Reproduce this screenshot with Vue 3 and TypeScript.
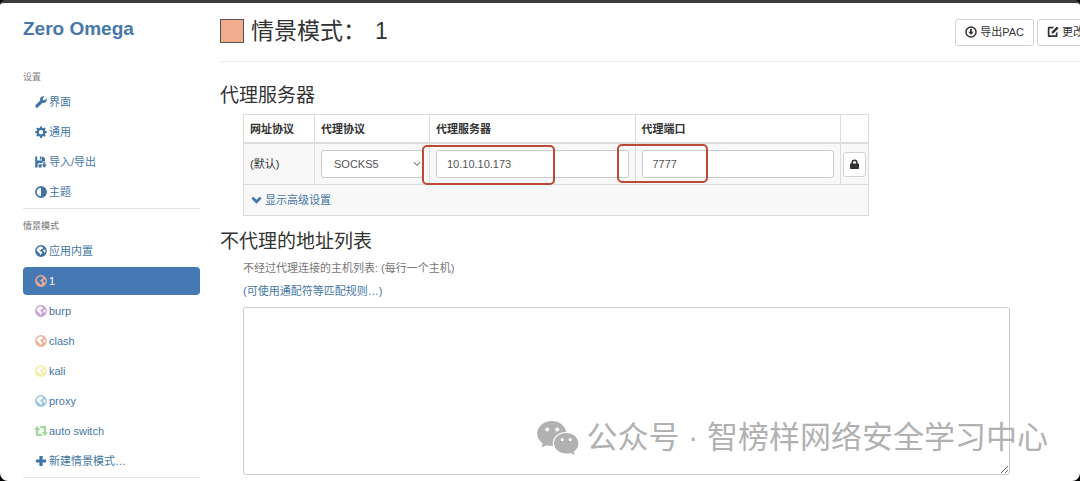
<script setup lang="ts">
import { ref } from 'vue'

interface NavItem {
  id: string
  label: string
  icon: string
  tone: string
}

const settings: NavItem[] = [
  { id: 'ui', label: '界面', icon: 'wrench', tone: 'link' },
  { id: 'general', label: '通用', icon: 'cog', tone: 'link' },
  { id: 'io', label: '导入/导出', icon: 'save', tone: 'link' },
  { id: 'theme', label: '主题', icon: 'adjust', tone: 'link' },
]

const profiles: NavItem[] = [
  { id: 'system', label: '应用内置', icon: 'globe', tone: 'link' },
  { id: 'one', label: '1', icon: 'globe', tone: 'salmon' },
  { id: 'burp', label: 'burp', icon: 'globe', tone: 'purple' },
  { id: 'clash', label: 'clash', icon: 'globe', tone: 'peach' },
  { id: 'kali', label: 'kali', icon: 'globe', tone: 'yellow' },
  { id: 'proxy', label: 'proxy', icon: 'globe', tone: 'sky' },
  { id: 'auto', label: 'auto switch', icon: 'retweet', tone: 'green' },
  { id: 'new', label: '新建情景模式…', icon: 'plus', tone: 'link' },
]

const groups = [
  { title: '设置', items: settings },
  { title: '情景模式', items: profiles },
]

const paths: Record<string, string> = {
  wrench:
    'M11.6 2.3 9.7 4.2 8 3.9 7.7 2.3 9.6.4C8.200-.1 6.700.2 5.800 1.200 5 2.100 4.800 3.400 5.200 4.500L.7 9C.1 9.600.1 10.500.7 11.200 1.400 11.900 2.400 11.900 3 11.300L7.500 6.800C8.600 7.200 9.900 7 10.800 6.100 11.800 5.200 12.100 3.600 11.600 2.300Z',
  cog:
    'M5.100.4h1.800l.3 1.500 1 .4 1.300-.8 1.200 1.200-.8 1.300.4 1 1.500.3v1.700l-1.500.3-.4 1 .8 1.300-1.200 1.200-1.300-.8-1 .4-.3 1.500H5.100l-.3-1.500-1-.4-1.300.8-1.200-1.200.8-1.300-.4-1L.2 7V5.300L1.700 5l.4-1-.8-1.300 1.200-1.200 1.300.8 1-.4ZM6 3.900a2.250 2.250 0 1 0 0 4.500 2.250 2.250 0 0 0 0-4.500Z',
  save:
    'M.2.400h2v4.200h4.600V.4h1l2.200 2v3H7.500v1.500H3.800L2.600 8v3.400H.2ZM4.900.4h1.400v3.100H4.900ZM3.600 8.300h3v3.100h-3ZM8.300 6.200h2v2.500h1.600L9.300 11.800 6.700 8.700h1.600Z',
  adjust:
    'M6 .1a5.900 5.900 0 1 0 0 11.800A5.900 5.900 0 0 0 6 .1ZM6 1.700v8.600a4.300 4.300 0 0 1 0-8.600Z',
  globe:
    'M6 .1a5.900 5.900 0 1 0 0 11.800A5.900 5.900 0 0 0 6 .1ZM6.200 1.300l.6.900 1-.1.300 1-.8.9-1.100.1-.4 1.200-1 .3.200.7 1.400.2.900 1-.5 1.100-.9.500-.2 1.100C4.900 9.500 4.900 8.700 4.300 8 3.800 7.300 2.500 6.700 1.700 5.500c.2-2.200 2.200-4.100 4.500-4.200ZM9 4.500l1.200.1.400 1.300-.3 1.300-.7.700-.6-1.100-.9-.5.100-1.100Z',
  retweet:
    'M2.700 1.700 0 5h1.600v4.200c0 .6.400 1 1 1h5L5.900 8.300H3.700V5h1.700ZM4.400 1.700h5c.6 0 1 .4 1 1V7H12l-2.700 3.300L6.600 7h1.700V3.700H6.100Z',
  plus: 'M4.400.9h3.200v3.500h3.500v3.200H7.600v3.500H4.400V7.600H.9V4.400h3.500Z',
}

const scheme = ref('SOCKS5')
const host = ref('10.10.10.173')
const port = ref('7777')
const bypass = ref('')
const active = ref('one')
</script>

<template>
  <div class="window">
    <aside class="sidebar">
      <h1 class="brand">Zero Omega</h1>
      <nav v-for="group in groups" :key="group.title" class="group">
        <h2 class="group-title">{{ group.title }}</h2>
        <ul class="nav">
          <li v-for="item in group.items" :key="item.id">
            <a
              href="#"
              class="nav-link"
              :class="{ active: active === item.id }"
              @click.prevent="active = item.id"
            >
              <svg class="icon" :class="[item.tone, item.icon]" viewBox="0 0 12 12" aria-hidden="true">
                <path :d="paths[item.icon]" fill-rule="evenodd" />
              </svg>
              <span>{{ item.label }}</span>
            </a>
          </li>
        </ul>
      </nav>
    </aside>

    <main class="main">
      <header class="header">
        <span class="swatch"></span>
        <h2 class="title"><span>情景模式：</span><span>1</span></h2>
        <div class="actions">
          <button type="button" class="btn">
            <svg class="icon" viewBox="0 0 12 12" aria-hidden="true">
              <path
                fill-rule="evenodd"
                d="M6 .2a5.800 5.800 0 1 0 0 11.600A5.800 5.800 0 0 0 6 .2ZM6 1.700a4.300 4.300 0 1 1 0 8.600 4.300 4.300 0 0 1 0-8.600ZM5.100 2.800h1.800v3h1.700L6 8.900 3.400 5.800h1.700Z"
              />
            </svg>
            导出PAC
          </button>
          <button type="button" class="btn">
            <svg class="icon" viewBox="0 0 12 12" aria-hidden="true">
              <path d="M7.200.8 5.600 2.500H2.500v6.800h6.300V7.200l1.700-1.700v4.400c0 .7-.5 1.100-1.100 1.100H1.900C1.200 11 .8 10.500.8 9.900v-8C.8 1.200 1.300.8 1.900.8Z" />
              <path d="M9.900.5 11.600 2.200 6.600 7.200 4.500 7.700 4.900 5.500Z" />
            </svg>
            更改
          </button>
        </div>
      </header>

      <section>
        <h3 class="section-title">代理服务器</h3>
        <div class="table-area">
          <table class="servers">
            <colgroup>
              <col class="col-url" />
              <col class="col-scheme" />
              <col />
              <col />
              <col class="col-auth" />
            </colgroup>
            <thead>
              <tr>
                <th scope="col">网址协议</th>
                <th scope="col">代理协议</th>
                <th scope="col">代理服务器</th>
                <th scope="col">代理端口</th>
                <th></th>
              </tr>
            </thead>
            <tbody>
              <tr>
                <td>(默认)</td>
                <td>
                  <div class="select-wrap">
                    <select v-model="scheme" class="control select" aria-label="代理协议">
                      <option>SOCKS5</option>
                    </select>
                    <svg class="caret" viewBox="0 0 8 6" aria-hidden="true">
                      <path d="M1 1.200 4 4.400 7 1.200" />
                    </svg>
                  </div>
                </td>
                <td class="marked">
                  <input v-model="host" class="control" type="text" aria-label="代理服务器" />
                  <span class="mark mark-host"></span>
                </td>
                <td class="marked">
                  <input v-model="port" class="control" type="text" aria-label="代理端口" />
                  <span class="mark mark-port"></span>
                </td>
                <td class="auth">
                  <button type="button" class="btn lock" aria-label="代理登录">
                    <svg viewBox="0 0 12 12" aria-hidden="true">
                      <path
                        fill-rule="evenodd"
                        d="M2.600 5V4a3.400 3.400 0 0 1 6.800 0v1h.7c.5 0 .8.300.8.800v4.400c0 .5-.3.800-.8.800H1.900c-.5 0-.8-.3-.8-.8V5.800c0-.5.300-.8.800-.8ZM4.300 5h3.400V4a1.700 1.700 0 0 0-3.400 0Z"
                      />
                    </svg>
                  </button>
                </td>
              </tr>
              <tr>
                <td colspan="5" class="advanced">
                  <a href="#" @click.prevent>
                    <svg class="chevron" viewBox="0 0 12 12" aria-hidden="true">
                      <path d="M.4 3.900 2.500 1.800 6 5.200 9.500 1.800 11.600 3.900 6 9.500Z" />
                    </svg>
                    显示高级设置
                  </a>
                </td>
              </tr>
            </tbody>
          </table>
        </div>
      </section>

      <section>
        <h3 class="section-title">不代理的地址列表</h3>
        <div class="bypass">
          <label for="bypass" class="help">不经过代理连接的主机列表: (每行一个主机)</label>
          <a href="#" class="help-link" @click.prevent>(可使用通配符等匹配规则…)</a>
          <textarea id="bypass" v-model="bypass" class="list"></textarea>
        </div>
      </section>
    </main>

    <div class="watermark">
      <svg viewBox="0 0 42 34" aria-hidden="true">
        <path
          fill-rule="evenodd"
          d="M15 0C6.700 0 .2 5.500.2 12.600c0 4 2.100 7.500 5.500 9.900L4.600 26.600l5-2.400c1.700.5 3.500.8 5.400.8h1.200c-.3-.9-.4-1.800-.4-2.700 0-6.500 6-11.500 13.600-11.300C27.900 4.600 22 0 15 0ZM10.200 6.500a2 2 0 1 1 0 4 2 2 0 0 1 0-4ZM20.200 6.500a2 2 0 1 1 0 4 2 2 0 0 1 0-4Z"
        />
        <path
          fill-rule="evenodd"
          d="M29.300 12C22.500 12 17 16.600 17 22.300s5.500 10.300 12.300 10.300c1.500 0 3-.2 4.300-.6l4 2-1-3.300c3-1.900 4.800-5 4.800-8.400C41.400 16.600 36 12 29.300 12ZM25.200 17a1.600 1.600 0 1 1 0 3.200 1.600 1.600 0 0 1 0-3.200ZM33.200 17a1.600 1.600 0 1 1 0 3.200 1.600 1.600 0 0 1 0-3.200Z"
        />
      </svg>
      <span>公众号 · 智榜样网络安全学习中心</span>
    </div>
  </div>
</template>

<style>
body {
  background: #000;
}
</style>

<style scoped>
* {
  box-sizing: border-box;
}

.window {
  position: relative;
  display: flex;
  height: 100vh;
  overflow: hidden;
  padding: 0 0 0 23px;
  border-top: 3px solid #3c3c3c;
  border-radius: 5px 5px 8px 8px;
  background: #fff;
  color: #333;
  font-family: 'Liberation Sans', 'Noto Sans CJK SC', sans-serif;
  font-size: 11px;
  line-height: 16px;
}

h1,
h2,
h3,
ul {
  margin: 0;
  padding: 0;
}

a {
  color: #4577a6;
  text-decoration: none;
}

svg {
  fill: currentColor;
}

.sidebar {
  flex: 0 0 177px;
  margin-right: 20px;
}

.brand {
  padding: 14px 0 28px;
  color: #4577ab;
  font-size: 19px;
  line-height: 24px;
}

.group {
  border-bottom: 1px solid #e4e4e4;
}

.group-title {
  margin-bottom: 5px;
  padding-top: 2px;
  color: #858585;
  font-size: 9px;
  font-weight: 400;
  line-height: 12px;
}

.group + .group {
  padding-top: 9px;
}

.group:last-child .group-title {
  font-weight: 500;
}

.nav {
  display: flex;
  flex-direction: column;
  gap: 2px;
  padding-bottom: 2px;
  list-style: none;
}

.nav-link {
  display: flex;
  align-items: center;
  gap: 2px;
  height: 28px;
  padding: 0 12px;
  border-radius: 4px;
}

.nav-link.active {
  background: #4678b3;
  color: #fff;
}

.icon {
  flex: none;
  width: 12px;
  height: 12px;
}

.icon.retweet {
  width: 14px;
  height: 14px;
  margin: 0 -1px;
}

.link {
  color: #3f73a5;
}

.salmon {
  color: #e0a996;
}

.purple {
  color: #c9a3d8;
}

.peach {
  color: #ebb496;
}

.yellow {
  color: #f3efa6;
}

.sky {
  color: #9fc8de;
}

.green {
  color: #9fd69a;
}

.main {
  flex: 1;
  min-width: 0;
}

.header {
  display: flex;
  align-items: center;
  height: 59px;
  border-bottom: 1px solid #eee;
}

.swatch {
  flex: none;
  width: 24px;
  height: 24px;
  margin-right: 7px;
  margin-bottom: 2px;
  border: 1px solid #555;
  background: #f1ab8d;
}

.title {
  display: flex;
  flex: none;
  gap: 9px;
  margin-bottom: 3px;
  font-size: 23px;
  font-weight: 400;
  line-height: 32px;
}

.actions {
  display: flex;
  flex: 1;
  justify-content: flex-end;
  gap: 3px;
  margin-right: -14px;
}

.btn {
  display: flex;
  flex: none;
  align-items: center;
  justify-content: center;
  gap: 3px;
  height: 27px;
  padding: 0 9px;
  border: 1px solid #d2d2d2;
  border-radius: 3px;
  background: #fff;
  color: #333;
  font: inherit;
}

.section-title {
  padding-top: 20px;
  font-size: 19px;
  font-weight: 400;
  line-height: 28px;
}

.table-area {
  margin: 4px 211px 0 23px;
}

.servers {
  width: 100%;
  border-collapse: collapse;
  table-layout: fixed;
}

.col-url {
  width: 71px;
}

.col-scheme {
  width: 115px;
}

.col-auth {
  width: 28px;
}

th,
td {
  padding: 6px;
  border: 1px solid #dcdcdc;
  text-align: left;
}

th {
  padding-bottom: 5px;
  border-bottom: 2px solid #dcdcdc;
}

td {
  background: #f8f8f8;
}

.select-wrap {
  position: relative;
}

.control {
  display: block;
  width: 100%;
  height: 28px;
  padding: 0 10px;
  border: 1px solid #ccc;
  border-radius: 3px;
  background: #fff;
  color: #555;
  font: inherit;
}

.select {
  appearance: none;
  padding: 0 12px;
}

.caret {
  position: absolute;
  top: 11px;
  right: 2px;
  width: 8px;
  height: 6px;
  fill: none;
  stroke: #444;
  pointer-events: none;
}

.marked {
  position: relative;
}

.mark {
  position: absolute;
  border: 2px solid #bd4a34;
  border-radius: 5px;
  pointer-events: none;
}

.mark-host {
  top: 1px;
  left: -8px;
  width: 133px;
  height: 40px;
}

.mark-port {
  top: 0;
  left: -19px;
  width: 91px;
  height: 39px;
}

.auth {
  padding: 0 2px;
}

.lock {
  width: 100%;
  height: 25px;
  padding: 0;
}

.lock svg {
  width: 11px;
  height: 11px;
}

.advanced {
  padding: 7px;
}

.advanced a {
  display: flex;
  align-items: center;
  gap: 3px;
}

.chevron {
  width: 11px;
  height: 11px;
}

section + section .section-title {
  padding-top: 12px;
}

.bypass {
  display: flex;
  flex-direction: column;
  align-items: flex-start;
  margin: 4px 70px 0 23px;
}

.help {
  margin-bottom: 7px;
  color: #777;
}

.list {
  width: 100%;
  height: 168px;
  margin-top: 8px;
  padding: 6px 10px;
  border: 1px solid #ccc;
  border-radius: 3px;
  background: #fff;
  color: #555;
  font: inherit;
}

.watermark {
  position: absolute;
  right: 32px;
  bottom: 23px;
  display: flex;
  align-items: center;
  gap: 7px;
  color: #b1b1b1;
  font-size: 31px;
  line-height: 40px;
  white-space: nowrap;
  pointer-events: none;
}

.watermark svg {
  width: 42px;
  height: 34px;
}
</style>
